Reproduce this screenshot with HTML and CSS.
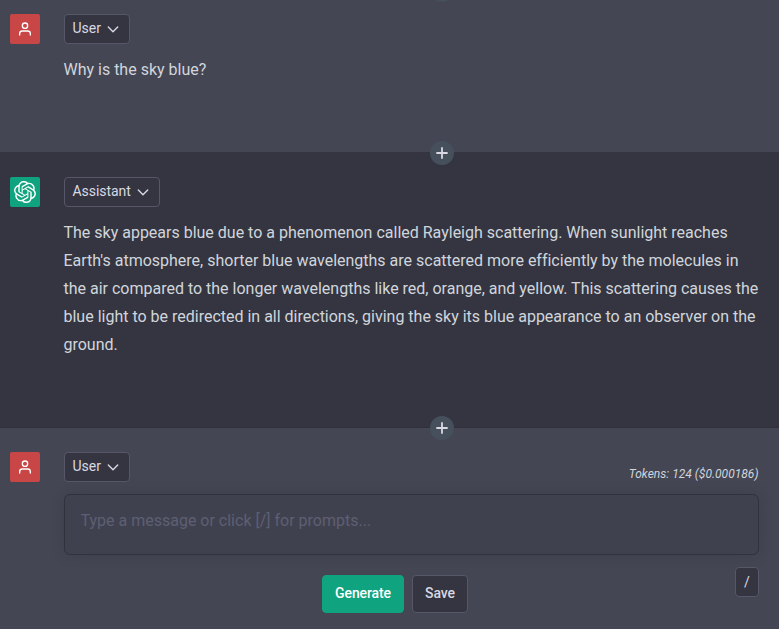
FILE: index.html
```html
<!DOCTYPE html>
<html lang="en">
<head>
<meta charset="utf-8">
<title>Chat</title>
<link rel="stylesheet" href="styles.css">
</head>
<body>
<svg class="defs" aria-hidden="true">
  <symbol id="person" viewBox="0 0 24 24"><g fill="none" stroke="currentColor" stroke-width="2" stroke-linecap="round" stroke-linejoin="round"><path d="M20 21v-2a4 4 0 0 0-4-4H8a4 4 0 0 0-4 4v2"/><circle cx="12" cy="7" r="4"/></g></symbol>
  <symbol id="chevron" viewBox="0 0 16 16"><path fill="none" stroke="currentColor" stroke-width="1.4" stroke-linecap="round" stroke-linejoin="round" d="M3.3 6L8 10.7 12.7 6"/></symbol>
  <symbol id="plus" viewBox="0 0 16 16"><path fill="none" stroke="currentColor" stroke-width="1.8" stroke-linecap="round" d="M8 3v10M3 8h10"/></symbol>
</svg>
<main class="chat">
  <section class="message question">
    <div class="add add-top"></div>
    <div class="avatar user"><svg><use href="#person"/></svg></div>
    <div class="content">
      <button class="role"><span>User</span><svg><use href="#chevron"/></svg></button>
      <p>Why is the sky blue?</p>
    </div>
    <button class="add"><svg><use href="#plus"/></svg></button>
  </section>
  <section class="message answer">
    <div class="avatar assistant"><svg viewBox="0 0 24 24"><path fill="currentColor" d="M22.2819 9.8211a5.9847 5.9847 0 0 0-.5157-4.9108 6.0462 6.0462 0 0 0-6.5098-2.9A6.0651 6.0651 0 0 0 4.9807 4.1818a5.9847 5.9847 0 0 0-3.9977 2.9 6.0462 6.0462 0 0 0 .7427 7.0966 5.98 5.98 0 0 0 .511 4.9107 6.051 6.051 0 0 0 6.5146 2.9001A5.9847 5.9847 0 0 0 13.2599 24a6.0557 6.0557 0 0 0 5.7718-4.2058 5.9894 5.9894 0 0 0 3.9977-2.9001 6.0557 6.0557 0 0 0-.7475-7.0729zm-9.022 12.6081a4.4755 4.4755 0 0 1-2.8764-1.0408l.1419-.0804 4.7783-2.7582a.7948.7948 0 0 0 .3927-.6813v-6.7369l2.02 1.1686a.071.071 0 0 1 .038.052v5.5826a4.504 4.504 0 0 1-4.4945 4.4944zm-9.6607-4.1254a4.4708 4.4708 0 0 1-.5346-3.0137l.142.0852 4.783 2.7582a.7712.7712 0 0 0 .7806 0l5.8428-3.3685v2.3324a.0804.0804 0 0 1-.0332.0615L9.74 19.9502a4.4992 4.4992 0 0 1-6.1408-1.6464zM2.3408 7.8956a4.485 4.485 0 0 1 2.3655-1.9728V11.6a.7664.7664 0 0 0 .3879.6765l5.8144 3.3543-2.0201 1.1685a.0757.0757 0 0 1-.071 0l-4.8303-2.7865A4.504 4.504 0 0 1 2.3408 7.872zm16.5963 3.8558L13.1038 8.364 15.1192 7.2a.0757.0757 0 0 1 .071 0l4.8303 2.7913a4.4944 4.4944 0 0 1-.6765 8.1042v-5.6772a.79.79 0 0 0-.407-.667zm2.0107-3.0231l-.142-.0852-4.7735-2.7818a.7759.7759 0 0 0-.7854 0L9.409 9.2297V6.8974a.0662.0662 0 0 1 .0284-.0615l4.8303-2.7866a4.4992 4.4992 0 0 1 6.6802 4.66zM8.3065 12.863l-2.02-1.1638a.0804.0804 0 0 1-.038-.0567V6.0742a4.4992 4.4992 0 0 1 7.3757-3.4537l-.142.0805L8.704 5.459a.7948.7948 0 0 0-.3927.6813zm1.0976-2.3654l2.602-1.4998 2.6069 1.4998v2.9994l-2.5974 1.4997-2.6067-1.4997Z"/></svg></div>
    <div class="content">
      <button class="role"><span>Assistant</span><svg><use href="#chevron"/></svg></button>
      <p>The sky appears blue due to a phenomenon called Rayleigh scattering. When sunlight reaches Earth's atmosphere, shorter blue wavelengths are scattered more efficiently by the molecules in the air compared to the longer wavelengths like red, orange, and yellow. This scattering causes the blue light to be redirected in all directions, giving the sky its blue appearance to an observer on the ground.</p>
    </div>
    <button class="add"><svg><use href="#plus"/></svg></button>
  </section>
  <section class="message compose">
    <div class="avatar user"><svg><use href="#person"/></svg></div>
    <div class="content">
      <div class="compose-head">
        <button class="role"><span>User</span><svg><use href="#chevron"/></svg></button>
        <span class="tokens">Tokens: 124 ($0.000186)</span>
      </div>
      <div class="field"><textarea rows="1" placeholder="Type a message or click [/] for prompts..."></textarea></div>
      <div class="actions">
        <div class="buttons">
          <button class="btn primary">Generate</button>
          <button class="btn">Save</button>
        </div>
        <button class="slash">/</button>
      </div>
    </div>
  </section>
</main>
</body>
</html>
```
FILE: styles.css
```css
* { box-sizing: border-box; }
body {
  margin: 0;
  height: 629px;
  overflow: hidden;
  background: #444654;
  color: #d9d9e3;
  font-family: Roboto, sans-serif;
}
button { font: inherit; color: inherit; cursor: pointer; }
.defs { position: absolute; width: 0; height: 0; }
.message {
  position: relative;
  display: flex;
  gap: 24px;
  padding: 24px 20px 0 10px;
  border-bottom: 1px solid #2f303b;
  background: #444654;
}
.question { height: 153px; padding-top: 14px; border-bottom-color: #343541; }
.answer { height: 275px; background: #343541; }
.compose { height: 201px; border-bottom: 0; }
.avatar {
  display: flex;
  align-items: center;
  justify-content: center;
  flex: none;
  width: 30px;
  height: 30px;
  border-radius: 2px;
  color: #fff;
}
.avatar.user { background: #c84646; }
.avatar.user svg { width: 16px; height: 16px; }
.avatar.assistant { background: #10a37f; }
.avatar.assistant svg { width: 22px; height: 22px; }
.content { flex: 1; min-width: 0; }
.role {
  display: flex;
  align-items: center;
  gap: 4px;
  height: 30px;
  padding: 0 8px 0 7.5px;
  border: 1px solid #565869;
  border-radius: 4px;
  background: #343541;
  font-size: 14px;
  line-height: 20px;
}
.role span { padding-bottom: 2px; }
.answer .role { letter-spacing: -.05px; }
.role svg { width: 16px; height: 16px; }
p {
  margin: 12px -2px 0 -.5px;
  color: #d1d5db;
  font-size: 16px;
  line-height: 28px;
  letter-spacing: -.003px;
}
.add {
  position: absolute;
  z-index: 1;
  left: 430px;
  bottom: -13px;
  display: flex;
  align-items: center;
  justify-content: center;
  width: 24px;
  height: 24px;
  padding: 0;
  border: 0;
  border-radius: 50%;
  background: #46505d;
}
.add svg { width: 16px; height: 16px; }
.add-top { top: -22px; bottom: auto; }
.compose-head {
  display: flex;
  align-items: flex-start;
  justify-content: space-between;
}
.tokens {
  margin: 14px .5px 0 0;
  color: #d1d5db;
  font-size: 12px;
  font-style: italic;
  line-height: 16px;
  letter-spacing: .02px;
}
.field {
  height: 61px;
  margin-top: 12px;
  padding: 12px 15.5px;
  border: 1px solid #30323c;
  border-radius: 6px;
  background: #40414f;
  box-shadow: 0 0 15px rgba(0, 0, 0, .1);
}
textarea {
  display: block;
  width: 100%;
  height: 28px;
  padding: 0;
  border: 0;
  outline: 0;
  resize: none;
  overflow: hidden;
  background: transparent;
  color: #fff;
  font: 16px/28px Roboto, sans-serif;
}
textarea::placeholder { color: #5d5f72; opacity: 1; }
.actions {
  display: grid;
  grid-template-columns: 24px 1fr 24px;
  margin-top: 12px;
}
.buttons {
  grid-column: 2;
  display: flex;
  justify-content: center;
  gap: 8px;
  margin: 8px 33px 0 0;
}
.btn {
  height: 38px;
  padding: 0 12px 2px;
  border: 1px solid #565869;
  border-radius: 4px;
  background: #343541;
  font-size: 14px;
  font-weight: 500;
  line-height: 20px;
  letter-spacing: -.1px;
}
.primary { border-color: #10a37f; background: #10a37f; color: #fff; }
.slash {
  height: 30px;
  padding: 0;
  border: 1px solid #565869;
  border-radius: 4px;
  background: #343541;
  font-size: 14px;
}
```
